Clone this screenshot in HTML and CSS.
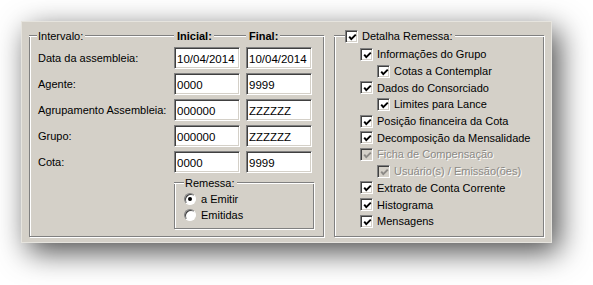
FILE: index.html
```html
<!DOCTYPE html>
<html lang="pt-BR">
<head>
    <meta charset="UTF-8">
    <title>Remessa</title>
    <link rel="stylesheet" href="styles.css">
</head>
<body>
    <div class="panel">
        <div class="group interval">
            <div class="group-head head-cols">
                <div class="head-cell">
                    <span class="rule lead"></span>
                    <span class="caption">Intervalo:</span>
                    <span class="rule"></span>
                </div>
                <div class="head-cell">
                    <span class="caption bold">Inicial:</span>
                    <span class="rule"></span>
                </div>
                <div class="head-cell">
                    <span class="caption bold">Final:</span>
                    <span class="rule"></span>
                </div>
            </div>
            <div class="group-body">
                <div class="fields">
                    <label>Data da assembleia:</label>
                    <input class="field" value="10/04/2014">
                    <input class="field" value="10/04/2014">

                    <label>Agente:</label>
                    <input class="field" value="0000">
                    <input class="field" value="9999">

                    <label>Agrupamento Assembleia:</label>
                    <input class="field" value="000000">
                    <input class="field" value="ZZZZZZ">

                    <label>Grupo:</label>
                    <input class="field" value="000000">
                    <input class="field" value="ZZZZZZ">

                    <label>Cota:</label>
                    <input class="field" value="0000">
                    <input class="field" value="9999">
                </div>

                <div class="group remessa">
                    <div class="group-head">
                        <span class="rule lead"></span>
                        <span class="caption">Remessa:</span>
                        <span class="rule"></span>
                    </div>
                    <div class="group-body">
                        <div class="option"><span class="radio checked"></span>a Emitir</div>
                        <div class="option"><span class="radio"></span>Emitidas</div>
                    </div>
                </div>
            </div>
        </div>

        <div class="group details">
            <div class="group-head">
                <span class="rule lead"></span>
                <span class="check"><svg viewBox="0 0 11 11"><polyline points="1.5,4.5 4,7.5 9.5,2"/></svg></span>
                <span class="caption">Detalha Remessa:</span>
                <span class="rule"></span>
            </div>
            <div class="group-body">
                <div class="item"><span class="check"><svg viewBox="0 0 11 11"><polyline points="1.5,4.5 4,7.5 9.5,2"/></svg></span>Informações do Grupo</div>
                <div class="item sub"><span class="check"><svg viewBox="0 0 11 11"><polyline points="1.5,4.5 4,7.5 9.5,2"/></svg></span>Cotas a Contemplar</div>
                <div class="item"><span class="check"><svg viewBox="0 0 11 11"><polyline points="1.5,4.5 4,7.5 9.5,2"/></svg></span>Dados do Consorciado</div>
                <div class="item sub"><span class="check"><svg viewBox="0 0 11 11"><polyline points="1.5,4.5 4,7.5 9.5,2"/></svg></span>Limites para Lance</div>
                <div class="item"><span class="check"><svg viewBox="0 0 11 11"><polyline points="1.5,4.5 4,7.5 9.5,2"/></svg></span>Posição financeira da Cota</div>
                <div class="item"><span class="check"><svg viewBox="0 0 11 11"><polyline points="1.5,4.5 4,7.5 9.5,2"/></svg></span>Decomposição da Mensalidade</div>
                <div class="item disabled"><span class="check"><svg viewBox="0 0 11 11"><polyline points="1.5,4.5 4,7.5 9.5,2"/></svg></span>Ficha de Compensação</div>
                <div class="item sub disabled"><span class="check"><svg viewBox="0 0 11 11"><polyline points="1.5,4.5 4,7.5 9.5,2"/></svg></span>Usuário(s) / Emissão(ões)</div>
                <div class="item"><span class="check"><svg viewBox="0 0 11 11"><polyline points="1.5,4.5 4,7.5 9.5,2"/></svg></span>Extrato de Conta Corrente</div>
                <div class="item"><span class="check"><svg viewBox="0 0 11 11"><polyline points="1.5,4.5 4,7.5 9.5,2"/></svg></span>Histograma</div>
                <div class="item"><span class="check"><svg viewBox="0 0 11 11"><polyline points="1.5,4.5 4,7.5 9.5,2"/></svg></span>Mensagens</div>
            </div>
        </div>
    </div>
</body>
</html>
```

FILE: styles.css
```css
html, body {
    height: 100%;
}
body {
    margin: 0;
    padding-top: 21px;
    box-sizing: border-box;
    background: #fff;
    font-family: "Liberation Sans", Arial, sans-serif;
    font-size: 11px;
    color: #000;
}
.panel {
    box-sizing: border-box;
    width: 531px;
    height: 222px;
    margin-left: 21px;
    padding: 7px 7px 0 7px;
    display: flex;
    align-items: flex-start;
    gap: 10px;
    background: #d4d0c8;
    border: 1px solid #e6e4de;
    box-shadow: 7px 9px 28px rgba(0, 0, 0, 0.7);
}

/* etched group box */
.group-head {
    display: flex;
    align-items: center;
    height: 14px;
}
.rule {
    flex: 1;
    height: 1px;
    border-top: 1px solid #808080;
    background: #fff;
}
.rule.lead {
    flex: none;
    width: 8px;
}
.caption {
    padding: 0 2px 0 1px;
    white-space: nowrap;
    line-height: 14px;
}
.bold {
    font-weight: bold;
}
.group-body {
    margin-top: -8px;
    border: 1px solid #808080;
    border-top: none;
    box-shadow: inset 1px 0 0 #fff, 1px 1px 0 #fff;
}

/* left box */
.interval {
    width: 295px;
}
.head-cols {
    display: grid;
    grid-template-columns: 145px 72px 1fr;
}
.head-cell {
    display: flex;
    align-items: center;
}
.head-cell .caption.bold {
    padding-left: 3px;
}
.interval > .group-body {
    padding: 12px 10px 7px 8px;
}
.fields {
    display: grid;
    grid-template-columns: 130px 66px 66px;
    grid-auto-rows: 22px;
    column-gap: 6px;
    row-gap: 4px;
    align-items: center;
}
.fields label {
    white-space: nowrap;
}
.field {
    box-sizing: border-box;
    width: 66px;
    height: 22px;
    margin: 0;
    padding: 1px 1px 0 2px;
    font-family: inherit;
    font-size: 11.5px;
    color: #000;
    background: #fff;
    border: 1px solid;
    border-color: #808080 #fff #fff #808080;
    box-shadow: inset 1px 1px 0 #404040, inset -1px -1px 0 #d4d0c8;
    outline: none;
}

.remessa {
    width: 140px;
    margin: 3px 0 0 136px;
}
.remessa .rule.lead {
    width: 10px;
}
.remessa .group-body {
    padding: 9px 0 5px 9px;
}
.option {
    display: flex;
    align-items: center;
    gap: 5px;
    height: 16px;
}
.radio {
    position: relative;
    box-sizing: border-box;
    width: 12px;
    height: 12px;
    border-radius: 50%;
    background: #fff;
    border: 1px solid;
    border-color: #808080 #fff #fff #808080;
    box-shadow: inset 1px 1px 0 #404040;
}
.radio.checked::after {
    content: "";
    position: absolute;
    left: 3px;
    top: 3px;
    width: 4px;
    height: 4px;
    border-radius: 50%;
    background: #000;
}

/* right box */
.details {
    width: 210px;
}
.details .rule.lead {
    width: 11px;
}
.details .group-head .caption {
    padding-left: 4px;
}
.details > .group-body {
    padding: 11px 0 6px 25px;
}
.item {
    display: flex;
    align-items: center;
    gap: 4px;
    height: 16.7px;
    white-space: nowrap;
}
.item.sub {
    padding-left: 17px;
}
.check {
    box-sizing: border-box;
    flex: none;
    width: 13px;
    height: 13px;
    padding: 1px;
    background: #fff;
    border: 1px solid;
    border-color: #808080 #fff #fff #808080;
    box-shadow: inset 1px 1px 0 #404040, inset -1px -1px 0 #d4d0c8;
}
.check svg {
    display: block;
    width: 9px;
    height: 9px;
    margin: 1px 0 0 1px;
    fill: none;
    stroke: #000;
    stroke-width: 2.4;
}
.item.disabled {
    color: #8c8a86;
    text-shadow: 1px 1px 0 #fff;
}
.item.disabled .check {
    background: #d4d0c8;
}
.item.disabled .check svg {
    stroke: #8c8a86;
}
```
